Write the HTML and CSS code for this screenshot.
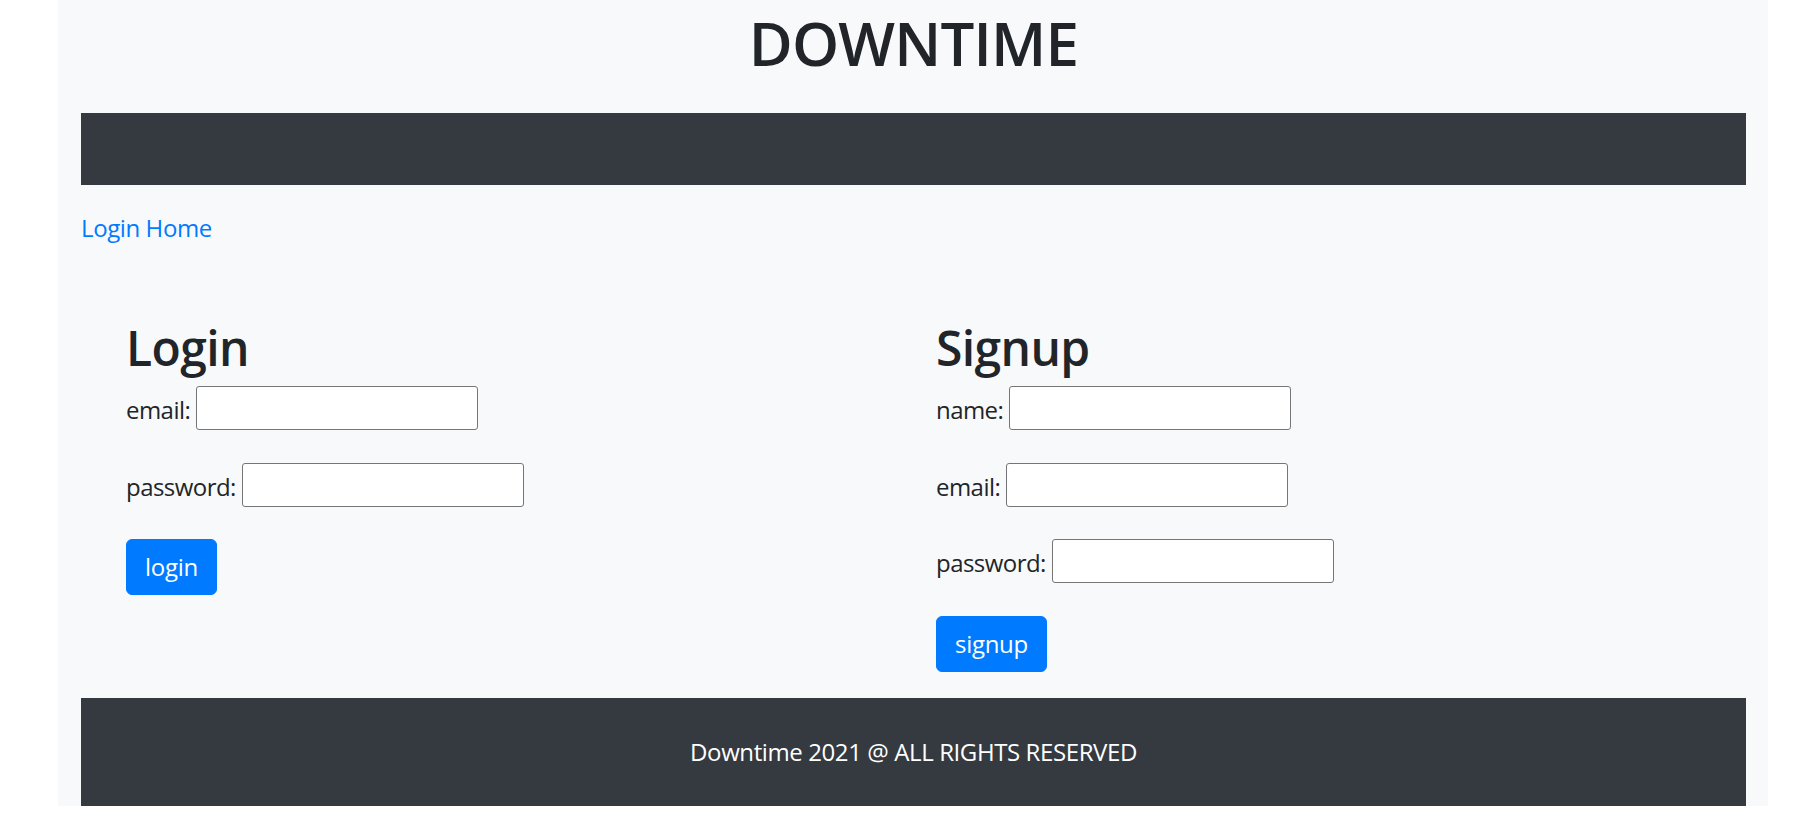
FILE: index.html
```html
<!DOCTYPE html>
<html lang="en">
<head>
<meta charset="utf-8">
<title>Downtime</title>
<link rel="stylesheet" href="styles.css">
</head>
<body>
<div class="page">
  <h1 class="brand">DOWNTIME</h1>
  <nav class="navbar"></nav>
  <a class="crumb" href="#">Login Home</a>
  <div class="forms">
    <section class="form-col">
      <h2 class="form-title">Login</h2>
      <div class="field"><label>email:</label><input type="text"></div>
      <div class="field"><label>password:</label><input type="password"></div>
      <button class="btn">login</button>
    </section>
    <section class="form-col">
      <h2 class="form-title">Signup</h2>
      <div class="field"><label>name:</label><input type="text"></div>
      <div class="field"><label>email:</label><input type="text"></div>
      <div class="field"><label>password:</label><input type="password"></div>
      <button class="btn">signup</button>
    </section>
  </div>
  <footer class="footer">Downtime 2021 @ ALL RIGHTS RESERVED</footer>
</div>
</body>
</html>
```
FILE: styles.css
```css
* { box-sizing: border-box; }
html, body { margin: 0; padding: 0; background: #fff; }
body {
  font-family: "Open Sans", "Noto Sans", sans-serif;
  color: #212529;
  font-size: 24px;
  line-height: 36px;
}
.page {
  margin: 0 50px 0 58px;
  background: #f8f9fa;
  padding: 0 22px 0 23px;
}
.brand {
  margin: 0;
  padding-top: 7px;
  font-size: 60px;
  line-height: 72px;
  font-weight: 600;
  text-align: center;
  letter-spacing: -0.8px;
}
.navbar {
  margin-top: 34px;
  height: 72px;
  background: #343a40;
}
.crumb {
  display: block;
  width: fit-content;
  margin-top: 25px;
  color: #007bff;
  text-decoration: none;
  letter-spacing: -0.4px;
}
.forms {
  display: grid;
  grid-template-columns: 810px 810px;
  padding-left: 45px;
  margin-top: 73px;
}
.form-col {
  display: flex;
  flex-direction: column;
  align-items: flex-start;
}
.form-title {
  margin: 0 0 9.5px;
  font-size: 48px;
  line-height: 57.6px;
  font-weight: 600;
  letter-spacing: -0.6px;
}
.field {
  display: flex;
  align-items: flex-end;
  gap: 6px;
  height: 44px;
  margin-bottom: 32.5px;
}
.field label {
  margin-bottom: 2px;
  letter-spacing: -0.55px;
}
.field input {
  width: 282px;
  height: 44px;
  border: 1px solid #767676;
  border-radius: 3px;
  background: #fff;
  margin: 0;
}
.btn {
  font-family: inherit;
  font-size: 24px;
  line-height: 36px;
  padding: 9px 18px;
  border: 1.5px solid #007bff;
  border-radius: 6px;
  background: #007bff;
  color: #fff;
  letter-spacing: -0.3px;
}
.footer {
  margin-top: 26.5px;
  height: 108px;
  padding: 36px 0;
  background: #343a40;
  color: #fff;
  text-align: center;
  letter-spacing: -0.4px;
}
```
